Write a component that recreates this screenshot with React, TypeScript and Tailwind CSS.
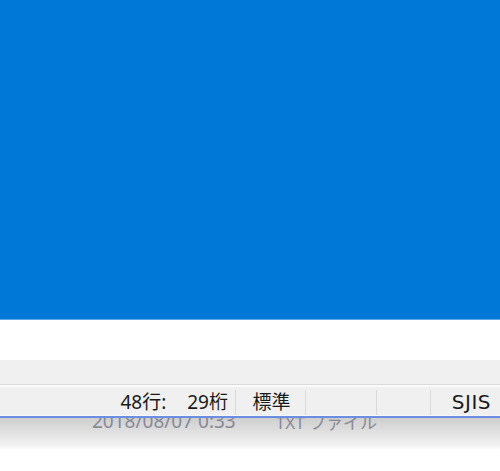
import React from "react";

const font = { fontFamily: '"Noto Sans", "Noto Sans CJK JP", sans-serif' };
const dv = { fontFamily: '"DejaVu Sans", "Noto Sans CJK JP", sans-serif' };

export default function App() {
  return (
    <div className="w-[500px] h-[471px] overflow-hidden bg-white flex flex-col" style={font}>
      <div className="h-[319px] bg-[#0078d7] shrink-0" />
      <div className="h-[1px] bg-[#5aa3e6] shrink-0" />
      <div className="h-[40px] bg-white shrink-0" />
      <div className="h-[24px] bg-[#f0f0f0] shrink-0" />
      <div className="h-[1px] bg-[#dadada] shrink-0" />
      <div className="h-[2px] bg-[#fbfbfb] shrink-0" />
      <div className="h-[28px] bg-[#f0f0f0] shrink-0 flex text-[19px] leading-none text-[#1a1a1a]">
        <div className="w-[235px] flex items-center justify-end pr-[7px] pt-[2px]">
          <span>48行:</span>
          <span className="ml-[21px]">29桁</span>
        </div>
        <div className="w-[1px] bg-[#d9d9d9] mt-[3px]" />
        <div className="w-[69px] flex items-center justify-center pt-[2px] pl-[2px]">標準</div>
        <div className="w-[1px] bg-[#d9d9d9] mt-[3px]" />
        <div className="w-[70px]" />
        <div className="w-[1px] bg-[#d9d9d9] mt-[3px]" />
        <div className="w-[53px]" />
        <div className="w-[1px] bg-[#d9d9d9] mt-[3px]" />
        <div className="flex-1 flex items-center justify-end pr-[9px] pt-[2px] text-[20px] tracking-[0.5px]" style={dv}>SJIS</div>
      </div>
      <div className="h-[1px] bg-[#f7f7f7] shrink-0" />
      <div className="h-[2px] bg-[#6b8ee2] shrink-0" />
      <div className="flex-1 overflow-hidden bg-gradient-to-b from-[#cfcfcf] via-[#f0f0f0] to-white to-[60%]">
        <div className="flex items-end h-[16px] -mt-[3px] leading-none text-[#7c7c8c] opacity-85">
          <span className="ml-[92px] text-[19px]">2018/08/07 0:33</span>
          <span className="ml-[40px] text-[17px]">TXT ファイル</span>
        </div>
      </div>
    </div>
  );
}
